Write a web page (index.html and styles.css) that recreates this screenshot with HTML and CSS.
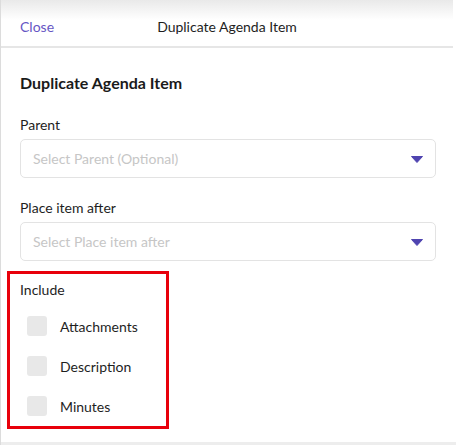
FILE: index.html
```html
<!DOCTYPE html>
<html>
<head>
<meta charset="utf-8">
<link rel="stylesheet" href="styles.css">
</head>
<body>
<div class="panel">
  <div class="header">
    <span class="close">Close</span>
    <span class="title">Duplicate Agenda Item</span>
  </div>
  <div class="content">
    <h1 class="heading">Duplicate Agenda Item</h1>
    <div class="field">
      <label class="label">Parent</label>
      <div class="select">
        <span class="placeholder">Select Parent (Optional)</span>
        <svg class="caret" width="12" height="7" viewBox="0 0 12 7"><path d="M0.5 0.5 H11.5 L6 6.5 Z" fill="#4f44b0" stroke="#4f44b0" stroke-linejoin="round"/></svg>
      </div>
    </div>
    <div class="field">
      <label class="label">Place item after</label>
      <div class="select">
        <span class="placeholder">Select Place item after</span>
        <svg class="caret" width="12" height="7" viewBox="0 0 12 7"><path d="M0.5 0.5 H11.5 L6 6.5 Z" fill="#4f44b0" stroke="#4f44b0" stroke-linejoin="round"/></svg>
      </div>
    </div>
    <div class="include">
      <div class="label include-label">Include</div>
      <div class="check-row"><span class="box"></span><span class="check-text">Attachments</span></div>
      <div class="check-row"><span class="box"></span><span class="check-text">Description</span></div>
      <div class="check-row"><span class="box"></span><span class="check-text">Minutes</span></div>
      <div class="highlight"></div>
    </div>
  </div>
  <div class="footer"></div>
</div>
</body>
</html>
```
FILE: styles.css
```css
html, body {
  margin: 0;
  padding: 0;
  background: #fff;
}
body {
  font-family: Lato, "Open Sans", sans-serif;
  color: #1e1e1e;
  width: 456px;
  height: 445px;
  overflow: hidden;
}
.panel {
  position: relative;
  height: 445px;
  border-left: 1px solid #dcdcdc;
  box-sizing: border-box;
  display: flex;
  flex-direction: column;
}
.header {
  position: relative;
  height: 48px;
  box-sizing: border-box;
  padding: 7px 0 0 19px;
  display: flex;
  align-items: center;
  background: linear-gradient(#e9e9e9 0px, #ffffff 20px);
  border-bottom: 2px solid #e6e6e6;
  margin-right: 3px;
}
.close {
  color: #6656c4;
  font-size: 14px;
}
.title {
  position: absolute;
  left: 0;
  right: 0;
  top: 7px;
  bottom: 0;
  display: flex;
  align-items: center;
  justify-content: center;
  font-size: 14px;
  color: #1e1e1e;
  pointer-events: none;
}
.content {
  flex: 1;
  padding: 0 20px 0 19px;
}
.heading {
  margin: 25px 0 0 0;
  font-size: 16px;
  font-weight: 700;
  line-height: 20px;
  color: #1a1a1a;
}
.field {
  margin-top: 23px;
}
.field + .field {
  margin-top: 21px;
}
.label {
  display: block;
  font-size: 14px;
  line-height: 18px;
  color: #1e1e1e;
}
.select {
  margin-top: 5px;
  height: 39px;
  box-sizing: border-box;
  border: 1px solid #e3e3e3;
  border-radius: 5px;
  display: flex;
  align-items: center;
  justify-content: space-between;
  padding: 0 12px 0 12px;
}
.placeholder {
  font-size: 14px;
  color: #c6c6c6;
}
.caret {
  display: block;
  margin-top: 1px;
}
.include {
  position: relative;
  margin-top: 20px;
}
.include-label {
  line-height: 18px;
}
.check-row {
  display: flex;
  align-items: center;
  height: 20px;
  margin-top: 20px;
  padding-left: 7px;
}
.include-label + .check-row {
  margin-top: 17px;
}
.box {
  width: 20px;
  height: 20px;
  border-radius: 3px;
  background: #e8e8e8;
  flex: none;
}
.check-text {
  margin-left: 13px;
  font-size: 14px;
  color: #1e1e1e;
}
.highlight {
  position: absolute;
  left: -13px;
  top: -10px;
  width: 162px;
  height: 158px;
  box-sizing: border-box;
  border: 3px solid #e8000b;
  pointer-events: none;
}
.footer {
  height: 3px;
  background: #ededed;
}
```
